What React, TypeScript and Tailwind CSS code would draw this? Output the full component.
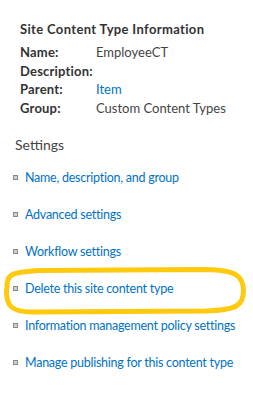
import React from "react";

const info = [
  { label: "Name:", value: "EmployeeCT", link: false },
  { label: "Description:", value: "", link: false },
  { label: "Parent:", value: "Item", link: true },
  { label: "Group:", value: "Custom Content Types", link: false },
];

const links = [
  "Name, description, and group",
  "Advanced settings",
  "Workflow settings",
  "Delete this site content type",
  "Information management policy settings",
  "Manage publishing for this content type",
];

const Bullet: React.FC = () => (
  <span className="mt-[6px] h-[5px] w-[5px] shrink-0 border border-[#8a8a8a] bg-[#cfcfcf]" />
);

export default function App() {
  return (
    <div className="relative h-[407px] w-[253px] bg-white font-['Lato',sans-serif] text-[#444444]">
      <div className="pl-5 pt-5">
        <h2 className="text-[13px] font-bold leading-[18px] tracking-[0.35px] text-[#333333]">
          Site Content Type Information
        </h2>
        <div className="mt-[5px] flex flex-col">
          {info.map((row) => (
            <div key={row.label} className="flex text-[13px] leading-[18.5px]">
              <span className="w-[76px] shrink-0 font-bold tracking-[0.2px] text-[#333333]">{row.label}</span>
              <span className={row.link ? "text-[#0072c6]" : "text-[#444444]"}>{row.value}</span>
            </div>
          ))}
        </div>
      </div>

      <div className="mt-[19px] pl-[15px] text-[14px] leading-[18px] text-[#444444]">Settings</div>

      <ul className="mt-[15px] flex flex-col gap-[19px] pl-[13px]">
        {links.map((l) => (
          <li key={l} className="flex gap-[7px] whitespace-nowrap text-[12.5px] leading-[18px] tracking-[-0.25px]">
            <Bullet />
            <a className="text-[#0072c6]">{l}</a>
          </li>
        ))}
      </ul>

      <svg
        className="pointer-events-none absolute left-0 top-0"
        width="253"
        height="407"
        viewBox="0 0 253 407"
      >
        <path
          d="M 7 288 C 6 274, 12 272, 40 270.5 L 205 269.5 C 236 270, 243 276, 243.5 290 C 243.5 305, 238 310, 205 311 L 32 312 C 12 312, 6 306, 6.5 290"
          fill="none"
          stroke="#ffc90e"
          strokeWidth="5"
          strokeLinecap="round"
        />
      </svg>
    </div>
  );
}
